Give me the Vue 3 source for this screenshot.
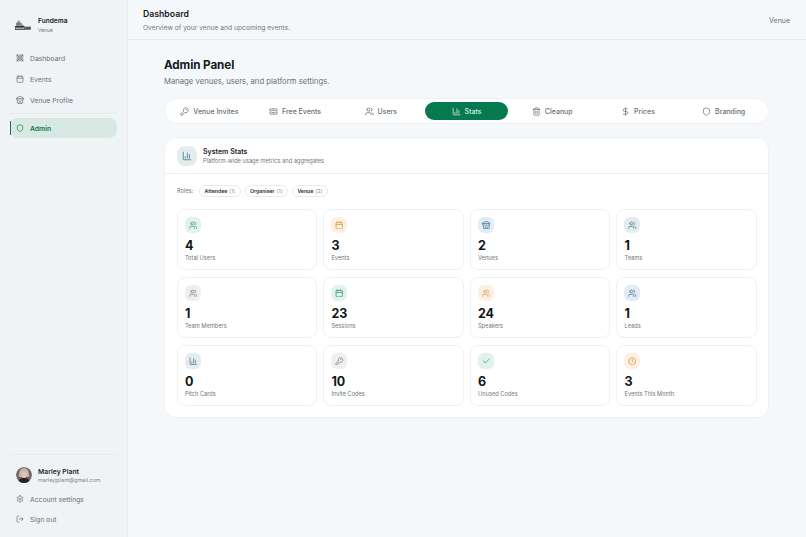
<script setup>
const c = (x, y, r) => `M${x - r} ${y}a${r} ${r} 0 1 0 ${2 * r} 0a${r} ${r} 0 1 0 ${-2 * r} 0`
const r = (x, y, w, h, q = 1) => `M${x + q} ${y}h${w - 2 * q}a${q} ${q} 0 0 1 ${q} ${q}v${h - 2 * q}a${q} ${q} 0 0 1 ${-q} ${q}h${-(w - 2 * q)}a${q} ${q} 0 0 1 ${-q} ${-q}v${-(h - 2 * q)}a${q} ${q} 0 0 1 ${q} ${-q}z`
const icons = {
  grid: [r(3, 3, 7, 7), r(14, 3, 7, 7), r(3, 14, 7, 7), r(14, 14, 7, 7), 'M3 3l7 7', 'M14 14l7 7', 'M21 3l-7 7', 'M10 14l-7 7'],
  calendar: ['M8 2v4', 'M16 2v4', r(3, 4, 18, 18, 2), 'M3 10h18'],
  store: ['m2 7 4.41-4.41A2 2 0 0 1 7.83 2h8.34a2 2 0 0 1 1.42.59L22 7', 'M4 12v8a2 2 0 0 0 2 2h12a2 2 0 0 0 2-2v-8', 'M15 22v-4a2 2 0 0 0-2-2h-2a2 2 0 0 0-2 2v4', 'M2 7h20', 'M22 7v3a2 2 0 0 1-2 2a2.7 2.7 0 0 1-1.59-.63.7.7 0 0 0-.82 0A2.7 2.7 0 0 1 16 12a2.7 2.7 0 0 1-1.59-.63.7.7 0 0 0-.82 0A2.7 2.7 0 0 1 12 12a2.7 2.7 0 0 1-1.59-.63.7.7 0 0 0-.82 0A2.7 2.7 0 0 1 8 12a2.7 2.7 0 0 1-1.59-.63.7.7 0 0 0-.82 0A2.7 2.7 0 0 1 4 12a2 2 0 0 1-2-2V7'],
  shield: ['M20 13c0 5-3.5 7.5-7.66 8.95a1 1 0 0 1-.67-.01C7.5 20.5 4 18 4 13V6a1 1 0 0 1 1-1c2 0 4.5-1.2 6.24-2.72a1.17 1.17 0 0 1 1.52 0C14.51 3.81 17 5 19 5a1 1 0 0 1 1 1z'],
  settings: ['M12.22 2h-.44a2 2 0 0 0-2 2v.18a2 2 0 0 1-1 1.73l-.43.25a2 2 0 0 1-2 0l-.15-.08a2 2 0 0 0-2.73.73l-.22.38a2 2 0 0 0 .73 2.73l.15.1a2 2 0 0 1 1 1.72v.51a2 2 0 0 1-1 1.74l-.15.09a2 2 0 0 0-.73 2.73l.22.38a2 2 0 0 0 2.73.73l.15-.08a2 2 0 0 1 2 0l.43.25a2 2 0 0 1 1 1.73V20a2 2 0 0 0 2 2h.44a2 2 0 0 0 2-2v-.18a2 2 0 0 1 1-1.73l.43-.25a2 2 0 0 1 2 0l.15.08a2 2 0 0 0 2.73-.73l.22-.39a2 2 0 0 0-.73-2.73l-.15-.08a2 2 0 0 1-1-1.74v-.5a2 2 0 0 1 1-1.74l.15-.09a2 2 0 0 0 .73-2.73l-.22-.38a2 2 0 0 0-2.73-.73l-.15.08a2 2 0 0 1-2 0l-.43-.25a2 2 0 0 1-1-1.73V4a2 2 0 0 0-2-2z', c(12, 12, 3)],
  logout: ['M9 21H5a2 2 0 0 1-2-2V5a2 2 0 0 1 2-2h4', 'm16 17 5-5-5-5', 'M21 12H9'],
  key: ['M2.586 17.414A2 2 0 0 0 2 18.828V21a1 1 0 0 0 1 1h3a1 1 0 0 0 1-1v-1a1 1 0 0 1 1-1h1a1 1 0 0 0 1-1v-1a1 1 0 0 1 1-1h.172a2 2 0 0 0 1.414-.586l.814-.814a6.5 6.5 0 1 0-4-4z', c(16.5, 7.5, 0.5)],
  ticket: ['M2 9a3 3 0 0 1 0 6v2a2 2 0 0 0 2 2h16a2 2 0 0 0 2-2v-2a3 3 0 0 1 0-6V7a2 2 0 0 0-2-2H4a2 2 0 0 0-2 2Z', 'M8 9h8', 'M8 15h8'],
  users: ['M16 21v-2a4 4 0 0 0-4-4H6a4 4 0 0 0-4 4v2', c(9, 7, 4), 'M22 21v-2a4 4 0 0 0-3-3.87', 'M16 3.13a4 4 0 0 1 0 7.75'],
  chart: ['M3 3v16a2 2 0 0 0 2 2h16', 'M18 17V9', 'M13 17V5', 'M8 17v-3'],
  trash: ['M3 6h18', 'M19 6v14c0 1-1 2-2 2H7c-1 0-2-1-2-2V6', 'M8 6V4c0-1 1-2 2-2h4c1 0 2 1 2 2v2', 'M10 11v6', 'M14 11v6'],
  dollar: ['M12 2v20', 'M17 5H9.5a3.5 3.5 0 0 0 0 7h5a3.5 3.5 0 0 1 0 7H6'],
  check: ['M20 6 9 17l-5-5'],
  clock: [c(12, 12, 10), 'M12 6v6l4 2']
}
const nav = [
  { label: 'Dashboard', icon: 'grid' },
  { label: 'Events', icon: 'calendar' },
  { label: 'Venue Profile', icon: 'store' }
]
const tabs = [
  { label: 'Venue Invites', icon: 'key' },
  { label: 'Free Events', icon: 'ticket' },
  { label: 'Users', icon: 'users' },
  { label: 'Stats', icon: 'chart', active: true },
  { label: 'Cleanup', icon: 'trash' },
  { label: 'Prices', icon: 'dollar' },
  { label: 'Branding', icon: 'shield' }
]
const roles = [
  { name: 'Attendee', n: 1 },
  { name: 'Organiser', n: 1 },
  { name: 'Venue', n: 2 }
]
const stats = [
  { v: 4, l: 'Total Users', i: 'users', t: 'green' },
  { v: 3, l: 'Events', i: 'calendar', t: 'orange' },
  { v: 2, l: 'Venues', i: 'store', t: 'blue' },
  { v: 1, l: 'Teams', i: 'users', t: 'slate' },
  { v: 1, l: 'Team Members', i: 'users', t: 'gray' },
  { v: 23, l: 'Sessions', i: 'calendar', t: 'green' },
  { v: 24, l: 'Speakers', i: 'users', t: 'orange' },
  { v: 1, l: 'Leads', i: 'users', t: 'blue' },
  { v: 0, l: 'Pitch Cards', i: 'chart', t: 'slate' },
  { v: 10, l: 'Invite Codes', i: 'key', t: 'gray' },
  { v: 6, l: 'Unused Codes', i: 'check', t: 'green' },
  { v: 3, l: 'Events This Month', i: 'clock', t: 'orange' }
]
</script>

<template>
  <div class="app">
    <aside class="sidebar">
      <div class="brand">
        <svg class="logo" viewBox="0 0 16 10">
          <path d="M1 3.500 3.500 0 6 2.500l3 3.500H1z" fill="#9a9d9c" />
          <path d="M1.500 3.500h4v1h-4z" fill="#4a4c4c" />
          <path d="M0 6h9.500v1.200H0z" fill="#2d2f2f" />
          <path d="M9 6.500h7V10H9z" fill="#7f8282" />
          <path d="M0 7.200h10V10H0z" fill="#5a5c5c" />
          <path d="M1 8.200h8V9H1z" fill="#bfc1c1" />
          <path d="M11 7.500h1.500V9H11zM13.500 7.500H15V9h-1.500z" fill="#2d2f2f" />
        </svg>
        <div>
          <div class="brand-name">Fundema</div>
          <div class="brand-sub">Venue</div>
        </div>
      </div>
      <nav class="nav">
        <a v-for="n in nav" :key="n.label" class="nav-item">
          <svg class="ico nav-ico" viewBox="0 0 24 24"><path v-for="d in icons[n.icon]" :key="d" :d="d" /></svg>
          {{ n.label }}
        </a>
      </nav>
      <div class="rule nav-rule"></div>
      <a class="nav-item admin">
        <svg class="ico nav-ico" viewBox="0 0 24 24"><path v-for="d in icons.shield" :key="d" :d="d" /></svg>
        Admin
      </a>
      <div class="spacer"></div>
      <div class="rule"></div>
      <div class="user">
        <svg class="avatar" viewBox="0 0 16 16">
          <circle cx="8" cy="8" r="8" fill="#6f625c" />
          <path d="M3 7c0-4 2.500-6 5-6s5 2 5 6l.5 3h-11z" fill="#c2b3a6" />
          <ellipse cx="8" cy="7.500" rx="2.800" ry="3.600" fill="#dcc5b6" />
          <path d="M2 16c.5-4 3.500-5 6-5s5.500 1 6 5z" fill="#26221f" />
        </svg>
        <div>
          <div class="user-name">Marley Plant</div>
          <div class="user-mail">marleyjplant@gmail.com</div>
        </div>
      </div>
      <a class="nav-item">
        <svg class="ico nav-ico" viewBox="0 0 24 24"><path v-for="d in icons.settings" :key="d" :d="d" /></svg>
        Account settings
      </a>
      <a class="nav-item">
        <svg class="ico nav-ico" viewBox="0 0 24 24"><path v-for="d in icons.logout" :key="d" :d="d" /></svg>
        Sign out
      </a>
    </aside>

    <div class="main">
      <header class="topbar">
        <div>
          <h1>Dashboard</h1>
          <p>Overview of your venue and upcoming events.</p>
        </div>
        <span class="role">Venue</span>
      </header>
      <main class="content">
        <h2>Admin Panel</h2>
        <p class="lead">Manage venues, users, and platform settings.</p>
        <div class="tabs">
          <button v-for="t in tabs" :key="t.label" class="tab" :class="{ active: t.active }">
            <svg class="ico tab-ico" viewBox="0 0 24 24"><path v-for="d in icons[t.icon]" :key="d" :d="d" /></svg>
            {{ t.label }}
          </button>
        </div>
        <section class="panel">
          <div class="panel-head">
            <div class="panel-icon">
              <svg class="ico" viewBox="0 0 24 24"><path v-for="d in icons.chart" :key="d" :d="d" /></svg>
            </div>
            <div>
              <h3>System Stats</h3>
              <p>Platform-wide usage metrics and aggregates</p>
            </div>
          </div>
          <div class="panel-body">
            <div class="roles">
              <span class="roles-label">Roles:</span>
              <span v-for="x in roles" :key="x.name" class="chip"><b>{{ x.name }}</b> <i>({{ x.n }})</i></span>
            </div>
            <div class="grid">
              <div v-for="s in stats" :key="s.l" class="stat">
                <div class="stat-icon" :class="s.t">
                  <svg class="ico" viewBox="0 0 24 24"><path v-for="d in icons[s.i]" :key="d" :d="d" /></svg>
                </div>
                <div class="stat-val">{{ s.v }}</div>
                <div class="stat-label">{{ s.l }}</div>
              </div>
            </div>
          </div>
        </section>
      </main>
    </div>
  </div>
</template>

<style>
html, body { margin: 0; background: #f5f8fb; }
</style>

<style scoped>
.app { display: flex; width: 806px; height: 537px; overflow: hidden; background: #f5f8fb; color: #16191d; font-family: Inter, "Liberation Sans", sans-serif; }
.ico { fill: none; stroke: currentColor; stroke-width: 2; stroke-linecap: round; stroke-linejoin: round; display: block; flex: none; }
h1, h2, h3, p { margin: 0; }

.sidebar { width: 107px; flex: none; border-right: 1px solid #e8ebee; background: #f0f3f6; display: flex; flex-direction: column; padding: 0 10px 8px; }
.brand { display: flex; align-items: center; gap: 7px; height: 46px; padding: 2px 0 0 5px; }
.logo { width: 16px; height: 10px; flex: none; }
.brand-name { font-size: 6.600px; font-weight: 600; line-height: 10px; }
.brand-sub { font-size: 5px; line-height: 7px; color: #757b80; margin-top: 1px; }
.nav { display: flex; flex-direction: column; gap: 1px; }
.nav-item { display: flex; align-items: center; gap: 6px; height: 20px; padding-left: 6px; font-size: 6.800px; color: #6a7075; }
.nav-ico { width: 8px; height: 8px; }
.rule { height: 1px; background: #e8ebee; }
.nav-rule { margin: 3px 0 4px; }
.admin { position: relative; background: #d8e8e3; color: #0b7a52; border-radius: 8px; font-weight: 600; }
.admin::before { content: ""; position: absolute; left: 0; top: 3px; bottom: 3px; width: 1px; background: #0b7a52; }
.spacer { flex: 1; }
.user { display: flex; align-items: center; gap: 6px; padding: 10px 0 5px 6px; }
.avatar { width: 16px; height: 16px; border-radius: 50%; flex: none; }
.user-name { font-size: 6.800px; font-weight: 600; line-height: 9px; color: #24282c; margin-top: 2px; }
.user-mail { font-size: 5.400px; line-height: 8px; color: #80868b; }

.main { flex: 1; min-width: 0; display: flex; flex-direction: column; }
.topbar { height: 40px; box-sizing: border-box; border-bottom: 1px solid #e8ebee; display: flex; justify-content: space-between; align-items: center; padding: 3px 16px 0 15px; }
h1 { font-size: 8.700px; font-weight: 600; line-height: 11px; }
.topbar p { font-size: 6.700px; line-height: 10px; margin-top: 2.500px; color: #71777c; }
.role { font-size: 7px; color: #6a7075; margin-top: -2px; }

.content { padding: 18px 37px 0 36px; }
h2 { font-size: 11.700px; font-weight: 700; line-height: 15px; letter-spacing: -0.1px; }
.lead { font-size: 7.700px; line-height: 11px; margin-top: 3px; color: #6a7075; }
.tabs { display: flex; gap: 3px; height: 26px; box-sizing: border-box; margin-top: 11px; padding: 3px; background: #fff; border: 1px solid #eef1f4; border-radius: 13px; }
.tab { flex: 1; display: flex; align-items: center; justify-content: center; gap: 4px; border: 0; background: none; border-radius: 9px; padding: 0; font: inherit; font-size: 7px; font-weight: 500; color: #6a7075; }
.tab.active { background: #067a4f; color: #d9efe6; }
.tab-ico { width: 9px; height: 9px; }

.panel { margin-top: 13px; background: #fff; border: 1px solid #eef1f4; border-radius: 12px; height: 281px; box-sizing: border-box; }
.panel-head { display: flex; align-items: center; gap: 6px; height: 35px; padding: 0 12px; border-bottom: 1px solid #eceff2; }
.panel-icon { width: 20px; height: 20px; border-radius: 8px; background: #e4edee; color: #3d7a8c; display: flex; align-items: center; justify-content: center; }
.panel-icon .ico { width: 10px; height: 10px; }
h3 { font-size: 7px; font-weight: 600; line-height: 9px; color: #1f2327; }
.panel-head p { font-size: 5.700px; line-height: 8px; margin-top: 1px; color: #71777c; }
.panel-body { padding: 0 11px 0 11.900px; }
.roles { display: flex; align-items: center; gap: 4px; height: 33px; padding-bottom: 2px; font-size: 5.200px; }
.roles-label { color: #71777c; margin-right: 2px; font-size: 5.700px; }
.chip { height: 12px; box-sizing: border-box; border: 1px solid #e8ebee; border-radius: 6px; padding: 0 4.400px; display: flex; align-items: center; gap: 2px; color: #2a2e32; }
.chip b { font-weight: 600; }
.chip i { font-style: normal; color: #8a8f94; }
.grid { display: grid; grid-template-columns: repeat(4, 1fr); grid-auto-rows: 61px; column-gap: 6px; row-gap: 7px; }
.stat { border: 1px solid #eef1f4; border-radius: 8px; box-sizing: border-box; padding: 7px; background: #fff; }
.stat-icon { width: 16px; height: 16px; border-radius: 6px; display: flex; align-items: center; justify-content: center; }
.stat-icon .ico { width: 8.500px; height: 8.500px; }
.green { background: #dff2ec; color: #2f9670; }
.orange { background: #fbf0e2; color: #d9963a; }
.blue { background: #e2ecf4; color: #44728e; }
.slate { background: #e4edee; color: #3f7585; }
.gray { background: #eeeff0; color: #767b7f; }
.stat-val { font-size: 12.500px; font-weight: 700; line-height: 15px; margin-top: 5px; color: #121416; }
.stat-label { font-size: 5.700px; line-height: 8px; margin-top: 1px; color: #71777c; }
</style>
